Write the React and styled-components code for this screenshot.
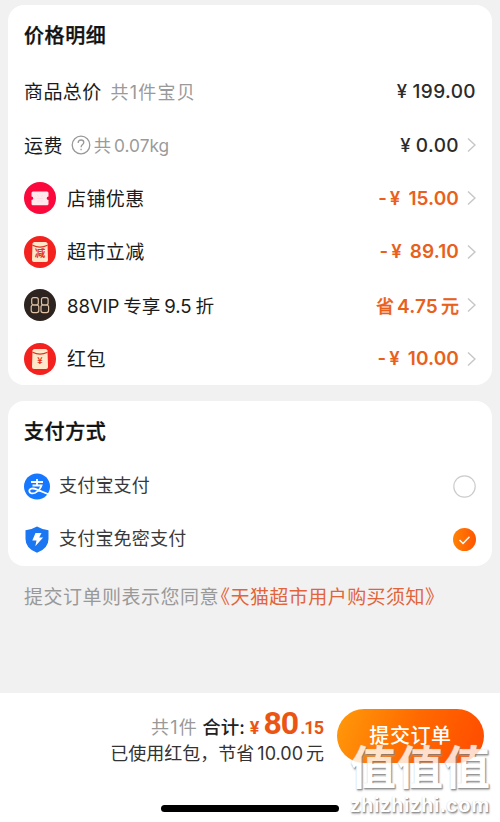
import React from "react";
import styled, { createGlobalStyle } from "styled-components";

const Global = createGlobalStyle`
  * { box-sizing: border-box; }
  body {
    margin: 0;
    background: #f1f1f1;
    font-family: Inter, "Noto Sans CJK SC", sans-serif;
    color: #1b1b1b;
  }
`;

const Page = styled.main`
  width: 500px;
  height: 822px;
  padding-top: 5px;
  display: flex;
  flex-direction: column;
  overflow: hidden;
  white-space: nowrap;
  background: #f1f1f1;
`;

const Card = styled.section`
  flex: none;
  height: ${(p) => p.$height}px;
  margin: 0 8px 16px;
  padding: 0 16px;
  border-radius: 16px;
  background: #fff;
`;

const Title = styled.h2`
  margin: 0;
  height: 60px;
  line-height: 62px;
  font-size: 20px;
  font-weight: 500;
  -webkit-text-stroke: 0.35px #111;
  letter-spacing: 0.6px;
  color: #111;
`;

const Row = styled.div`
  display: flex;
  align-items: center;
  height: 53.4px;
`;

const Label = styled.span`
  display: flex;
  align-items: baseline;
  gap: 4px;
  padding-bottom: 2px;
  font-size: ${(p) => (p.$mixed ? 18.6 : 19)}px;
  letter-spacing: ${(p) => (p.$mixed ? -0.1 : 0.4)}px;
`;

const Note = styled.span`
  margin-left: ${(p) => p.$gap}px;
  display: flex;
  align-items: baseline;
  gap: 3px;
  padding-bottom: 2px;
  font-size: ${(p) => p.$size}px;
  letter-spacing: ${(p) => p.$spacing}px;
  color: #9a9a9a;
`;

const IconSlot = styled.span`
  width: 32px;
  height: 32px;
  margin-right: 11px;
  display: flex;
  svg { display: block; }
`;

const Price = styled.span`
  margin-left: auto;
  display: flex;
  align-items: baseline;
  gap: ${(p) => p.$gap ?? 5}px;
  font-size: 19px;
  font-weight: ${(p) => (p.$accent ? 600 : 500)};
  letter-spacing: ${(p) => (p.$accent ? 0.1 : 0.4)}px;
  color: ${(p) => (p.$accent ? "#e9601b" : "#2b2b2b")};
`;

const PriceUnit = styled.span`
  font-size: 18px;
  font-weight: 500;
  -webkit-text-stroke: 0.3px currentColor;
`;

const Yen = styled.span`
  font-size: 18.5px;
`;

const Minus = styled.span`
  margin-right: ${(p) => p.$after ?? 0}px;
`;

const ArrowSvg = styled.svg`
  width: 9px;
  height: 16px;
  margin-left: 8px;
  fill: none;
  stroke: #c7c7c7;
  stroke-width: 1.5;
`;

const PayTitle = styled(Title)`
  height: 59px;
`;

const PayRow = styled(Row)`
  height: 53px;
`;

const PayIcon = styled.svg`
  width: 26px;
  height: 27px;
  margin-right: 9px;
`;

const PayName = styled.span`
  padding-bottom: 6px;
  font-size: 18px;
  letter-spacing: 0.2px;
  color: #3a3a3a;
`;

const Radio = styled.svg`
  width: 23px;
  height: 23px;
  margin-left: auto;
`;

const Terms = styled.p`
  margin: 0 0 0 24px;
  height: 28px;
  line-height: 32px;
  font-size: 19px;
  letter-spacing: 0.5px;
  color: #999;
`;

const TermsLink = styled.a`
  margin-left: -8px;
  letter-spacing: 0.45px;
  color: #e2643a;
`;

const Footer = styled.footer`
  position: relative;
  flex: none;
  height: 129px;
  margin-top: auto;
  padding: 0 16px 0 0;
  background: #fff;
`;

const Checkout = styled.div`
  display: flex;
  justify-content: flex-end;
  gap: 13px;
  padding-top: 16px;
`;

const Summary = styled.div`
  display: flex;
  flex-direction: column;
  align-items: flex-end;
  margin-top: -2px;
`;

const TotalLine = styled.div`
  display: flex;
  align-items: baseline;
  height: 34px;
  line-height: 33px;
`;

const Count = styled.span`
  font-size: 18px;
  letter-spacing: 1.3px;
  color: #999;
`;

const TotalLabel = styled.span`
  margin: 0 5px 0 4px;
  font-size: 18.5px;
  font-weight: 500;
  color: #222;
`;

const Amount = styled.span`
  font-family: Roboto, sans-serif;
  font-weight: 700;
  font-size: ${(p) => p.$size}px;
  letter-spacing: ${(p) => p.$spacing ?? 0}px;
  margin-right: ${(p) => p.$after ?? 0}px;
  color: #ea5514;
`;

const Saved = styled.div`
  display: flex;
  gap: 3px;
  height: 24px;
  line-height: 26px;
  font-size: 18px;
  color: #333;
`;

const Submit = styled.button`
  width: 147px;
  height: 54px;
  padding: 0;
  border: 0;
  border-radius: 27px;
  background: linear-gradient(110deg, #ff9a0a, #ff6a00 50%, #ff4a00);
  color: #fff;
  font: 500 20px/52px Inter, "Noto Sans CJK SC", sans-serif;
  letter-spacing: 0.6px;
`;

const HomeBar = styled.div`
  width: 178px;
  height: 7px;
  border-radius: 4px;
  background: #000;
  position: absolute;
  left: 161px;
  bottom: 10px;
`;

const Watermark = styled.div`
  position: absolute;
  left: 350px;
  top: 45px;
  width: 150px;
  opacity: 0.8;
  color: #fff;
  text-shadow: 1px 1px 1px #777, 1px 2px 2px #aaa, 0 0 1px #ccc;
  pointer-events: none;
`;

const MarkName = styled.div`
  font: 700 46px/53px "Noto Sans CJK SC", sans-serif;
  letter-spacing: 1px;
`;

const MarkSite = styled.div`
  margin-top: 2px;
  font: 700 20.5px/24px "Liberation Sans", sans-serif;
  letter-spacing: 0.5px;
`;

const IconText = styled.text`
  font-family: "Noto Sans CJK SC", sans-serif;
  font-weight: 700;
  text-anchor: middle;
`;

const Arrow = () => (
  <ArrowSvg viewBox="0 0 9 16">
    <path d="M1 1.5 8 8l-7 6.5" />
  </ArrowSvg>
);

const CouponIcon = () => (
  <svg width="32" height="32" viewBox="0 0 32 32">
    <circle cx="16" cy="16" r="16" fill="#fb083c" />
    <path d="M9 9.500h14q1.500 0 1.500 1.500v3.500a1.800 1.800 0 0 0 0 3.600V21.700q0 1.500-1.500 1.500H9q-1.500 0-1.500-1.500v-3.600a1.800 1.800 0 0 0 0-3.600V11q0-1.500 1.500-1.500Z" fill="#ffe9ee" />
    <path d="m13 13 1.500 1.500M19 13l-1.500 1.500M13 16.500h6M13 19h6" stroke="#fbdde4" fill="none" />
  </svg>
);

const PacketIcon = ({ mark, size }) => (
  <svg width="32" height="32" viewBox="0 0 32 32">
    <circle cx="16" cy="16" r="16" fill="#f4221f" />
    <path d="M8.500 7.500Q9 6 10.500 6h11q1.500 0 2 1.500L24 24q0 2-2 2H10q-2 0-2-2Z" fill="#ffe8c9" />
    <path d="M8.500 9.300q7.500 3.600 15 0" fill="none" stroke="#dc3526" strokeWidth="1.200" />
    <IconText x="16" y={size > 9 ? 21.3 : 21} fontSize={size} fill="#e33122">{mark}</IconText>
  </svg>
);

const Digit = ({ x }) => (
  <g fill="none" stroke="#dfc1a5" strokeWidth="1.200">
    <rect x={x + 0.5} y="8.600" width="6.600" height="7.400" rx="2" />
    <rect x={x} y="16" width="7.600" height="7.600" rx="2" />
  </g>
);

const VipIcon = () => (
  <svg width="32" height="32" viewBox="0 0 32 32">
    <circle cx="16" cy="16" r="16" fill="#2d241f" />
    <Digit x={7.2} />
    <Digit x={17} />
  </svg>
);

const HelpIcon = styled.svg`
  width: 20px;
  height: 20px;
  margin-left: 8px;
  fill: none;
  stroke: #999;
  stroke-width: 1.3;
`;

const discounts = [
  { icon: <CouponIcon />, label: "店铺优惠", amount: "15.00" },
  { icon: <PacketIcon mark="减" size={10.5} />, label: "超市立减", amount: "89.10" },
  { icon: <VipIcon />, vip: true },
  { icon: <PacketIcon mark="¥" size={9} />, label: "红包", amount: "10.00" },
];

export default function App() {
  return (
    <Page>
      <Global />
      <Card $height={380}>
        <Title>价格明细</Title>
        <Row>
          <Label>商品总价</Label>
          <Note $gap={9} $size={18} $spacing={1.2}>共1件宝贝</Note>
          <Price><Yen>¥</Yen><span>199.00</span></Price>
        </Row>
        <Row>
          <Label>运费</Label>
          <HelpIcon viewBox="0 0 20 20">
            <circle cx="10" cy="10" r="8.800" />
            <path d="M7.200 8q0-3 2.900-3 2.700 0 2.700 2.500c0 2-2.700 2.200-2.700 4.700M10.100 13.700v1.500" />
          </HelpIcon>
          <Note $gap={3} $size={17.3} $spacing={0}><span>共</span><span>0.07kg</span></Note>
          <Price><Yen>¥</Yen><span>0.00</span></Price>
          <Arrow />
        </Row>
        {discounts.map((d, i) => (
          <Row key={i}>
            <IconSlot>{d.icon}</IconSlot>
            {d.vip ? (
              <Label $mixed><span>88VIP</span><span>专享</span><span>9.5</span><span>折</span></Label>
            ) : (
              <Label>{d.label}</Label>
            )}
            {d.vip ? (
              <Price $accent $gap={3}><PriceUnit>省</PriceUnit><span>4.75</span><PriceUnit>元</PriceUnit></Price>
            ) : (
              <Price $accent $gap={8}><Yen><Minus $after={3}>-</Minus>¥</Yen><span>{d.amount}</span></Price>
            )}
            <Arrow />
          </Row>
        ))}
      </Card>
      <Card $height={165}>
        <PayTitle>支付方式</PayTitle>
        <PayRow>
          <PayIcon viewBox="0 0 26 27">
            <circle cx="13" cy="13.500" r="13" fill="#1677ff" />
            <path d="M7 9h12M13 6v6.500M8.500 12.500h9q-1.800 5-6.200 7.200c-3.200 1.500-6 .5-6-1.700 0-2.400 3.500-3.300 7.200-1.700L25 21.500" fill="none" stroke="#fff" strokeWidth="1.800" />
          </PayIcon>
          <PayName>支付宝支付</PayName>
          <Radio viewBox="0 0 23 23">
            <circle cx="11.500" cy="11.500" r="10.700" fill="#fff" stroke="#ccc" strokeWidth="1.200" />
          </Radio>
        </PayRow>
        <PayRow>
          <PayIcon viewBox="0 0 26 27">
            <path d="M13 .5Q18 3.500 24.500 4.300V13q0 9.500-11.500 13.800Q1.500 22.500 1.500 13V4.300Q8 3.500 13 .5Z" fill="#1b76f2" />
            <path d="M11.500 7h6l-2.300 4.600h3.900L11.300 20.300l1.200-5.700H8.300Z" fill="#fff" />
          </PayIcon>
          <PayName>支付宝免密支付</PayName>
          <Radio viewBox="0 0 23 23">
            <defs>
              <linearGradient id="radioFill">
                <stop stopColor="#ff8205" />
                <stop offset="1" stopColor="#ff5500" />
              </linearGradient>
            </defs>
            <circle cx="11.500" cy="11.500" r="11.500" fill="url(#radioFill)" />
            <path d="m6.500 12 3.500 3.500 6.500-6.800" fill="none" stroke="#fff" strokeWidth="1.500" />
          </Radio>
        </PayRow>
      </Card>
      <Terms>
        提交订单则表示您同意<TermsLink>《天猫超市用户购买须知》</TermsLink>
      </Terms>
      <Footer>
        <Checkout>
          <Summary>
            <TotalLine>
              <Count>共1件</Count>
              <TotalLabel>合计:</TotalLabel>
              <Amount $size={18} $after={4}>¥</Amount>
              <Amount $size={32} $spacing={-1} $after={2}>80</Amount>
              <Amount $size={18} $spacing={-1} $after={1}>.15</Amount>
            </TotalLine>
            <Saved><span>已使用红包，节省</span><span>10.00</span><span>元</span></Saved>
          </Summary>
          <Submit>提交订单</Submit>
        </Checkout>
        <HomeBar />
        <Watermark>
          <MarkName>值值值</MarkName>
          <MarkSite>zhizhizhi.com</MarkSite>
        </Watermark>
      </Footer>
    </Page>
  );
}
